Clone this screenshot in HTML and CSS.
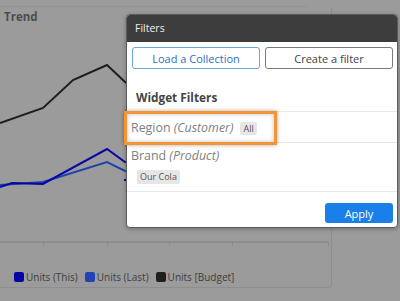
FILE: index.html
```html
<!DOCTYPE html>
<html lang="en">
<head>
  <meta charset="UTF-8" />
  <title>Trend - Filters</title>
  <link rel="stylesheet" href="styles.css">
</head>
<body>
  <div class="topbar"></div>

  <div class="widget">
    <div class="widget-title">Trend</div>

    <svg class="chart" width="333" height="222" viewBox="0 0 333 222">
      <polyline points="0,98 43,83 73,55 107,40 125,57 160,80" fill="none" stroke="#1e1e1e" stroke-width="2"/>
      <polyline points="0,160 43,157 107,137 125,146 160,150" fill="none" stroke="#2142ad" stroke-width="2"/>
      <polyline points="0,162 12,158 43,159 107,124 125,137 160,140" fill="none" stroke="#0707a2" stroke-width="2"/>
      <rect x="124" y="154" width="2" height="2" fill="#0707a2"/>
      <line x1="0" y1="217" x2="329" y2="217" stroke="#8a8a8a" stroke-width="1.5"/>
      <line x1="43.5" y1="218" x2="43.5" y2="221" stroke="#8a8a8a"/>
      <line x1="107.5" y1="218" x2="107.5" y2="221" stroke="#8a8a8a"/>
      <line x1="169.5" y1="218" x2="169.5" y2="221" stroke="#8a8a8a"/>
      <line x1="232.5" y1="218" x2="232.5" y2="221" stroke="#8a8a8a"/>
      <line x1="328.5" y1="218" x2="328.5" y2="221" stroke="#8a8a8a"/>
    </svg>

    <div class="legend">
      <span class="legend-item"><i class="swatch this"></i>Units (This)</span>
      <span class="legend-item"><i class="swatch last"></i>Units (Last)</span>
      <span class="legend-item"><i class="swatch budget"></i>Units [Budget]</span>
    </div>
  </div>

  <div class="modal">
    <div class="modal-header">Filters</div>
    <div class="modal-actions">
      <button class="btn btn-outline-blue">Load a Collection</button>
      <button class="btn btn-outline">Create a filter</button>
    </div>
    <div class="section-title">Widget Filters</div>
    <div class="filter-row first">
      <span class="filter-name">Region <em>(Customer)</em></span>
      <span class="chip">All</span>
    </div>
    <div class="filter-row">
      <div class="filter-name">Brand <em>(Product)</em></div>
      <span class="chip chip-block">Our Cola</span>
    </div>
    <div class="modal-footer">
      <button class="btn btn-primary">Apply</button>
    </div>
  </div>

  <div class="highlight"></div>
</body>
</html>
```

FILE: styles.css
```css
body {
  margin: 0;
  width: 400px;
  height: 301px;
  overflow: hidden;
  position: relative;
  background: #9b9b9b;
  font-family: "Open Sans", "Noto Sans", sans-serif;
}

.topbar {
  width: 307px;
  height: 6px;
  border-bottom: 1px solid #929292;
}

.widget {
  margin-left: -2px;
  width: 334px;
  height: 281px;
  box-sizing: border-box;
  border: 1px solid #8e8e8e;
  border-top: none;
  border-radius: 0 0 4px 4px;
}

.widget-title {
  padding: 2px 0 0 5px;
  font-size: 11.5px;
  line-height: 16px;
  font-weight: 700;
  color: #4d4d4d;
}

.chart {
  display: block;
  margin-left: 1px;
}

.legend {
  display: flex;
  gap: 7px;
  margin: 23px 0 0 15px;
  font-size: 10px;
  line-height: 14px;
  color: #3e3e3e;
}

.legend-item {
  display: flex;
  align-items: center;
  gap: 2px;
}

.swatch {
  display: inline-block;
  width: 10px;
  height: 10px;
  border-radius: 2px;
}
.swatch.this { background: #0606a6; }
.swatch.last { background: #2143b3; }
.swatch.budget { background: #1f1f1f; }

.modal {
  position: absolute;
  left: 126px;
  top: 14px;
  width: 272px;
  height: 214px;
  box-sizing: border-box;
  background: #fff;
  border: 1px solid #5c5c5c;
  border-radius: 4px;
  box-shadow: 0 1px 4px rgba(0, 0, 0, 0.3);
  overflow: hidden;
}

.modal-header {
  height: 27px;
  background: #3d3d3d;
  color: #ececec;
  font-size: 10.5px;
  line-height: 27px;
  padding-left: 8px;
}

.modal-actions {
  display: flex;
  gap: 5px;
  padding: 5px 4px 0 5px;
}

.btn {
  font-family: "Open Sans", "Noto Sans", sans-serif;
  font-size: 11px;
  height: 22px;
  padding: 0;
  border-radius: 3px;
  background: #fff;
  cursor: pointer;
}

.modal-actions .btn {
  flex: 1;
}

.btn-outline-blue {
  border: 1px solid #6aa6e0;
  color: #2e6fb8;
}

.btn-outline {
  border: 1px solid #7a7a7a;
  color: #444;
}

.btn-primary {
  width: 68px;
  height: 20px;
  border: none;
  background: #1a7fe8;
  color: #fff;
}

.section-title {
  padding: 20px 0 0 9px;
  height: 22px;
  font-size: 11.8px;
  line-height: 16px;
  font-weight: 700;
  color: #444;
}

.filter-row {
  border-top: 1px solid #e8e8e8;
  padding: 5px 0 7px 4px;
  font-size: 12.4px;
  line-height: 16px;
  color: #808080;
}

.filter-row.first {
  display: flex;
  align-items: center;
  gap: 7px;
  padding: 8px 0 6px 4px;
}

.chip {
  display: inline-block;
  background: #e6e6e6;
  color: #555;
  font-size: 9px;
  line-height: 13px;
  padding: 0 3px;
  border-radius: 2px;
}

.chip-block {
  margin: 6px 0 0 6px;
  line-height: 14px;
}

.modal-footer {
  border-top: 1px solid #e8e8e8;
  display: flex;
  justify-content: flex-end;
  padding: 11px 4px 0 0;
}

.highlight {
  position: absolute;
  left: 124px;
  top: 111px;
  width: 147px;
  height: 28px;
  border: 3px solid #f29437;
  box-shadow: 0 0 4px rgba(0, 0, 0, 0.35), inset 0 0 4px rgba(0, 0, 0, 0.25);
}
```
